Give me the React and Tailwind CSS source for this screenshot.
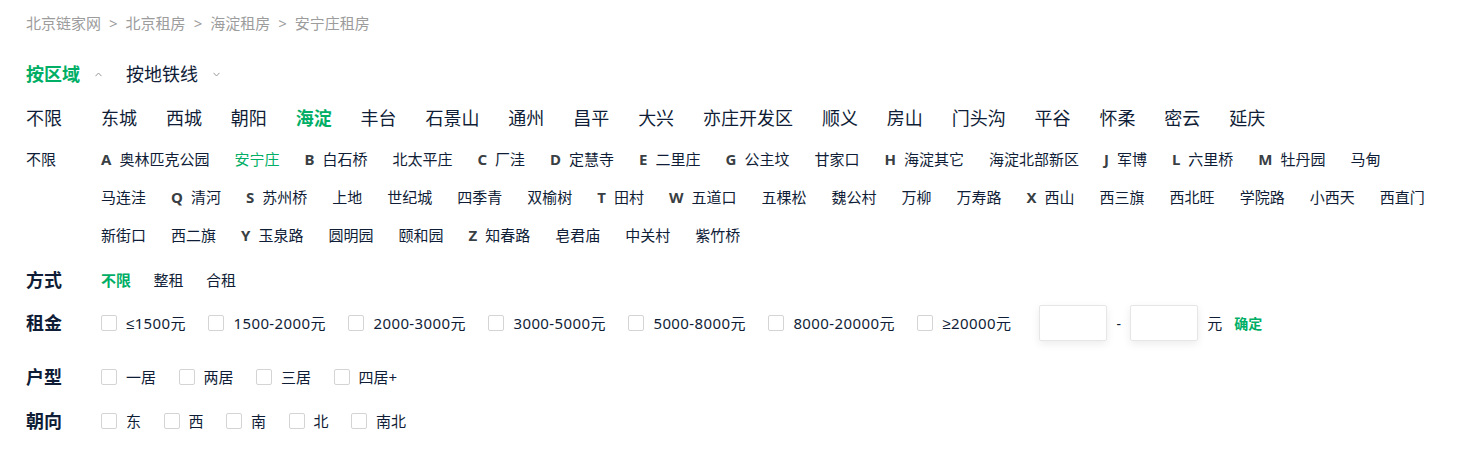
import React from 'react';

const districts = ['东城', '西城', '朝阳', '海淀', '丰台', '石景山', '通州', '昌平', '大兴', '亦庄开发区', '顺义', '房山', '门头沟', '平谷', '怀柔', '密云', '延庆'];

const areas = [
  ['A', '奥林匹克公园'], ['', '安宁庄'], ['B', '白石桥'], ['', '北太平庄'], ['C', '厂洼'], ['D', '定慧寺'],
  ['E', '二里庄'], ['G', '公主坟'], ['', '甘家口'], ['H', '海淀其它'], ['', '海淀北部新区'], ['J', '军博'],
  ['L', '六里桥'], ['M', '牡丹园'], ['', '马甸'], ['', '马连洼'], ['Q', '清河'], ['S', '苏州桥'], ['', '上地'],
  ['', '世纪城'], ['', '四季青'], ['', '双榆树'], ['T', '田村'], ['W', '五道口'], ['', '五棵松'], ['', '魏公村'],
  ['', '万柳'], ['', '万寿路'], ['X', '西山'], ['', '西三旗'], ['', '西北旺'], ['', '学院路'], ['', '小西天'],
  ['', '西直门'], ['', '新街口'], ['', '西二旗'], ['Y', '玉泉路'], ['', '圆明园'], ['', '颐和园'], ['Z', '知春路'],
  ['', '皂君庙'], ['', '中关村'], ['', '紫竹桥'],
];

const prices = ['≤1500元', '1500-2000元', '2000-3000元', '3000-5000元', '5000-8000元', '8000-20000元', '≥20000元'];
const layouts = ['一居', '两居', '三居', '四居+'];
const facings = ['东', '西', '南', '北', '南北'];

const Chevron = ({ up }) => (
  <svg width="7" height="5" viewBox="0 0 7 5" className="ml-[15px]">
    <path d={up ? 'M0.5 4.2 L3.5 1 L6.5 4.2' : 'M0.5 0.8 L3.5 4 L6.5 0.8'} fill="none" stroke="#9a9a9a" strokeWidth="1" />
  </svg>
);

const Check = ({ label, wide }) => (
  <label className="flex items-center">
    <span className="w-4 h-4 rounded-[2px] border border-[#d4d4d4] bg-white" />
    <span className={`ml-[9px] text-[15px] text-[#101d37] ${wide ? 'tracking-[0.4px]' : ''}`}>{label}</span>
  </label>
);

const Label = ({ children }) => (
  <div className="w-[75px] shrink-0 text-[18px] font-bold text-[#101d37]">{children}</div>
);

export default function App() {
  return (
    <div className="bg-white min-h-[451px] px-[26px] font-['Noto_Sans','Liberation_Sans','Noto_Sans_CJK_SC',sans-serif] text-[#101d37]">
      <nav className="pt-[13px] h-[33px] flex items-center text-[15px] leading-[20px] text-[#9c9c9c]">
        {['北京链家网', '北京租房', '海淀租房', '安宁庄租房'].map((t, i) => (
          <React.Fragment key={t}>
            {i > 0 && <span className="mx-[8px]">&gt;</span>}
            <a>{t}</a>
          </React.Fragment>
        ))}
      </nav>

      <div className="mt-[29px] h-[24px] flex items-center text-[18px] leading-[24px]">
        <span className="font-bold text-[#00ae66]">按区域</span>
        <Chevron up />
        <span className="ml-[24px]">按地铁线</span>
        <Chevron />
      </div>

      <div className="mt-[20px] flex h-[24px] text-[18px] leading-[24px]">
        <div className="w-[75px] shrink-0">不限</div>
        <div className="flex gap-x-[28.9px]">
          {districts.map((d) => (
            <a key={d} className={d === '海淀' ? 'font-bold text-[#00ae66]' : ''}>{d}</a>
          ))}
        </div>
      </div>

      <div className="mt-[10px] flex text-[15px] leading-[38px]">
        <div className="w-[75px] shrink-0">不限</div>
        <div className="flex flex-wrap gap-x-[25px] flex-1">
          {areas.map(([k, n]) => (
            <a key={n} className={`h-[38px] flex items-center ${n === '安宁庄' ? 'text-[#00ae66]' : ''}`}>
              {k && <b className="mr-[8px] text-[#394043]">{k}</b>}
              {n}
            </a>
          ))}
        </div>
      </div>

      <div className="mt-[7px] h-[38px] flex items-center">
        <Label>方式</Label>
        <div className="flex gap-x-[22.5px] text-[15px]">
          <a className="font-bold text-[#00ae66]">不限</a>
          <a>整租</a>
          <a>合租</a>
        </div>
      </div>

      <div className="h-[48px] flex items-center">
        <Label>租金</Label>
        <div className="flex items-center gap-x-[22.5px]">
          {prices.map((p) => <Check key={p} label={p} wide />)}
        </div>
        <div className="ml-[28px] flex items-center text-[15px]">
          <input className="w-[68px] h-[36px] rounded-[2px] border border-[#e6e6e6] shadow-[0_3px_8px_rgba(0,0,0,0.08)] outline-none" />
          <span className="w-[23px] text-center text-[14px]">-</span>
          <input className="w-[68px] h-[36px] rounded-[2px] border border-[#e6e6e6] shadow-[0_3px_8px_rgba(0,0,0,0.08)] outline-none" />
          <span className="ml-[9px]">元</span>
          <a className="ml-[12px] font-bold text-[#00ae66] text-[14px]">确定</a>
        </div>
      </div>

      <div className="mt-[8px] h-[44px] flex items-center">
        <Label>户型</Label>
        <div className="flex items-center gap-x-[22.5px]">
          {layouts.map((p) => <Check key={p} label={p} />)}
        </div>
      </div>

      <div className="h-[44px] flex items-center">
        <Label>朝向</Label>
        <div className="flex items-center gap-x-[22.5px]">
          {facings.map((p) => <Check key={p} label={p} />)}
        </div>
      </div>
    </div>
  );
}
